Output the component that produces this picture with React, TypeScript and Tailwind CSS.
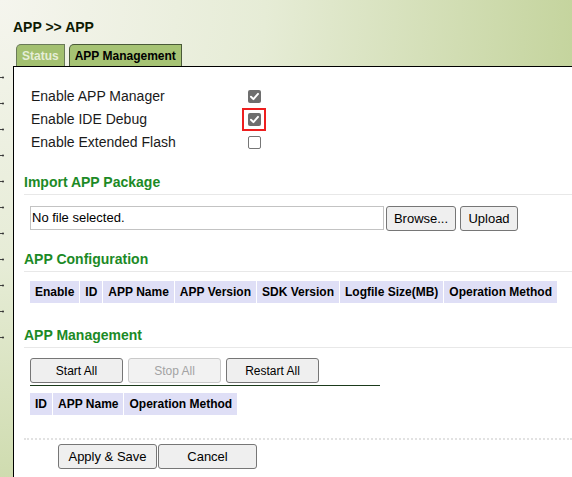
import React from "react";

const Check = ({ checked }: { checked: boolean }) =>
  checked ? (
    <span className="flex h-[13px] w-[13px] items-center justify-center rounded-[2px] bg-[#6e6e6e]">
      <svg width="13" height="13" viewBox="0 0 13 13">
        <path d="M3 6.8 L5.4 9.1 L10 3.9" fill="none" stroke="#fff" strokeWidth="2" strokeLinecap="round" strokeLinejoin="round" />
      </svg>
    </span>
  ) : (
    <span className="block h-[13px] w-[13px] rounded-[2px] border border-[#767676] bg-white" />
  );

const Btn = ({ children, w, disabled, size = "text-[12px]" }: { children: React.ReactNode; w: string; disabled?: boolean; size?: string }) => (
  <div
    className={
      "flex h-[25px] items-center justify-center rounded-[3px] border " +
      w +
      " " +
      size +
      (disabled ? " border-[#c9c9c9] bg-[#f2f2f2] text-[#a3a3a3]" : " border-[#767676] bg-[#efefef] text-black")
    }
  >
    {children}
  </div>
);

const Heading = ({ children }: { children: React.ReactNode }) => (
  <div className="border-b border-[#e8e8e8] pb-[4px] text-[14px] font-bold leading-[16px] text-[#1c8a26]">{children}</div>
);

const HeadRow = ({ cols }: { cols: string[] }) => (
  <div className="flex gap-px self-start">
    {cols.map((c) => (
      <div key={c} className="flex h-[22px] items-center bg-[#dfdff6] px-[5px] text-[12px] font-bold text-black">
        {c}
      </div>
    ))}
  </div>
);

export default function App() {
  const marks = Array.from({ length: 11 });
  return (
    <div
      className="flex h-[477px] w-[572px] flex-col overflow-hidden bg-[radial-gradient(circle_590px_at_0_0,#f5f5ee_0%,#e6ecd6_45%,#c3d39b_100%)]"
      style={{ fontFamily: '"Liberation Sans", Arial, sans-serif' }}
    >
      <div className="h-[44px] pl-[13px] pt-[19px] text-[14px] font-bold leading-[16px] text-[#0e1a02]">APP &gt;&gt; APP</div>
      <div className="flex h-[22px] gap-[4px] pl-[16px]">
        <div className="flex h-[22px] items-center rounded-tl-[5px] border-l border-r border-t border-[#6a7a58] bg-[#a3c070] px-[5px] text-[12px] font-bold text-[#e6eed8]">
          Status
        </div>
        <div className="flex h-[22px] items-center rounded-tl-[5px] border-l border-r border-t border-[#4a5a38] bg-[#a6c374] px-[5px] text-[12px] font-bold text-black">
          APP Management
        </div>
      </div>
      <div className="flex flex-1">
        <div className="flex w-[13px] flex-col gap-[23px] pt-[10px]">
          {marks.map((_, i) => (
            <svg key={i} width="4" height="3" viewBox="0 0 4 3">
              <path d="M0 1.5 H3" stroke="#444" strokeWidth="1" />
              <circle cx="3" cy="1.5" r="1" fill="#333" />
            </svg>
          ))}
        </div>
        <div className="flex flex-1 flex-col border-l border-t border-black bg-white pl-[10px] text-[#1a1a1a]">
          <div className="flex flex-col pl-[7px] pt-[18px]">
            {[
              ["Enable APP Manager", true, false],
              ["Enable IDE Debug", true, true],
              ["Enable Extended Flash", false, false],
            ].map(([label, checked, hl]) => (
              <div key={label as string} className="flex h-[23px] items-center">
                <div className="w-[217px] text-[14px] text-[#1a1a1a]">{label as string}</div>
                <div className="relative">
                  <Check checked={checked as boolean} />
                  {hl ? <div className="absolute -left-[6px] -top-[5px] h-[23px] w-[24px] border-2 border-[#ee1f1f]" /> : null}
                </div>
              </div>
            ))}
          </div>

          <div className="mt-[20px]">
            <Heading>Import APP Package</Heading>
          </div>
          <div className="mt-[11px] flex items-start pl-[6px]">
            <div className="flex h-[24px] w-[354px] items-center border border-[#c3c3c3] pl-[1px] text-[13px] text-black">No file selected.</div>
            <div className="ml-[2px]">
              <Btn w="w-[70px]" size="text-[13px]">Browse...</Btn>
            </div>
            <div className="ml-[4px]">
              <Btn w="w-[58px]" size="text-[13px]">Upload</Btn>
            </div>
          </div>

          <div className="mt-[20px]">
            <Heading>APP Configuration</Heading>
          </div>
          <div className="mt-[9px] flex pl-[6px]">
            <HeadRow cols={["Enable", "ID", "APP Name", "APP Version", "SDK Version", "Logfile Size(MB)", "Operation Method"]} />
          </div>

          <div className="mt-[24px]">
            <Heading>APP Management</Heading>
          </div>
          <div className="ml-[6px] mt-[10px] flex w-[350px] gap-[5px] border-b border-[#1b3a1b] pb-[2px]">
            <Btn w="w-[93px]">Start All</Btn>
            <Btn w="w-[93px]" disabled>
              Stop All
            </Btn>
            <Btn w="w-[93px]">Restart All</Btn>
          </div>
          <div className="mt-[7px] flex pl-[6px]">
            <HeadRow cols={["ID", "APP Name", "Operation Method"]} />
          </div>

          <div className="mt-[23px] border-t-2 border-dotted border-[#e2e2e2]" />
          <div className="mt-[4px] flex gap-[1px] pl-[34px]">
            <Btn w="w-[99px]" size="text-[13px]">Apply &amp; Save</Btn>
            <Btn w="w-[99px]" size="text-[13px]">Cancel</Btn>
          </div>
        </div>
      </div>
    </div>
  );
}
